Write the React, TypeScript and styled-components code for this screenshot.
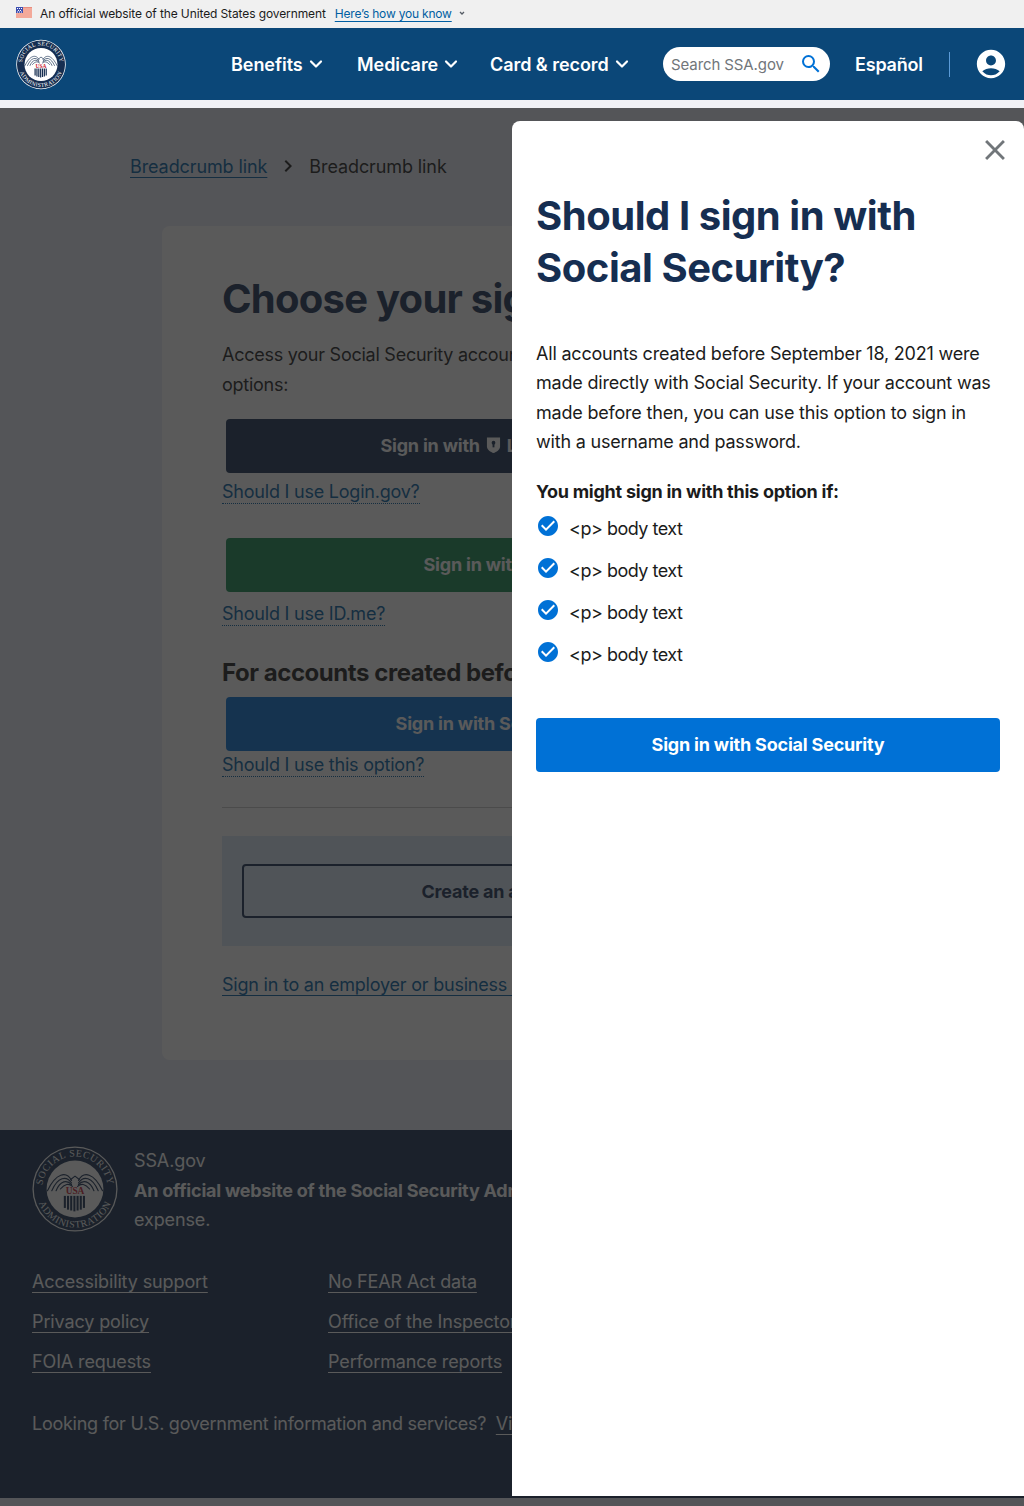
import React from "react";
import styled, { createGlobalStyle } from "styled-components";

const FONT = `"Inter", "Liberation Sans", sans-serif`;
const NAVY = "#162e51";
const BLUE = "#0071d6";

const Global = createGlobalStyle`
  html, body { margin: 0; padding: 0; background: #e9edf6; }
  body { font-family: ${FONT}; color: #1b1b1b; }
  * { box-sizing: border-box; }
`;

const Page = styled.div`
  position: relative;
  width: 1024px;
  height: 1506px;
  overflow: hidden;
  background: #e9edf6;
`;

/* Government banner */
const GovBanner = styled.div`
  height: 28px;
  background: #f0f0f0;
  display: flex;
  align-items: center;
  padding: 0 0 1px 16px;
  font-size: 12px;
  letter-spacing: -0.11px;
  color: #1b1b1b;
`;
const Flag = styled.svg`
  width: 16px;
  height: 11px;
  margin-right: 8px;
  margin-top: -2px;
`;
const BannerLink = styled.a`
  color: #005ea2;
  letter-spacing: -0.2px;
  text-decoration: underline;
  text-underline-offset: 3px;
  margin-left: 9px;
`;
const BannerCaret = styled.svg`
  width: 8px;
  height: 8px;
  margin-left: 6px;
  margin-top: -2px;
`;

/* Site header */
const Header = styled.header`
  height: 72px;
  background: #0b4778;
  display: flex;
  align-items: center;
  padding-left: 16px;
`;
const LogoWrap = styled.div`
  width: 50px;
  height: 51px;
  flex: none;
  margin-right: 165px;
`;
const NavItem = styled.a<{ $w: number }>`
  width: ${(p) => p.$w}px;
  flex: none;
  display: flex;
  align-items: center;
  gap: 5px;
  color: #fff;
  font-size: 18px;
  font-weight: 600;
  letter-spacing: -0.05px;
`;
const SearchPill = styled.div`
  width: 167px;
  height: 34px;
  flex: none;
  border-radius: 17px;
  background: #fff;
  display: flex;
  align-items: center;
  justify-content: space-between;
  padding: 0 7px 0 8px;
  margin-right: 25px;
  color: #71767a;
  font-size: 15px;
  letter-spacing: -0.1px;
`;
const Lang = styled.a`
  color: #fff;
  font-size: 18px;
  font-weight: 600;
  letter-spacing: -0.2px;
  width: 94px;
  flex: none;
`;
const VRule = styled.div`
  width: 1px;
  height: 25px;
  background: #5b9bd8;
  margin-right: 24px;
`;
const UserIcon = styled.svg`
  width: 34px;
  height: 34px;
  fill: #fff;
`;
const Strip = styled.div`
  height: 8px;
  background: #f0f1f6;
`;

/* Main content behind the overlay */
const Main = styled.main`
  height: 1022px;
  padding: 47px 0 0 130px;
`;
const Breadcrumbs = styled.nav`
  height: 22px;
  display: flex;
  align-items: center;
  font-size: 18px;
  letter-spacing: -0.1px;
`;
const CrumbLink = styled.a`
  color: #005ea2;
  text-decoration: underline;
  text-underline-offset: 4px;
`;
const CrumbIcon = styled.svg`
  width: 24px;
  height: 24px;
  fill: #1b1b1b;
  margin: 0 9px 0 9px;
`;
const Card = styled.section`
  width: 700px;
  height: 834px;
  margin: 49px 0 0 32px;
  padding: 47px 60px 0;
  background: #fff;
  border-radius: 8px;
`;
const CardTitle = styled.h1`
  margin: 0;
  font-size: 40px;
  line-height: 52px;
  font-weight: 700;
  letter-spacing: -0.75px;
  color: ${NAVY};
  white-space: nowrap;
`;
const CardIntro = styled.p`
  margin: 15px 0 0;
  font-size: 18px;
  line-height: 29.5px;
  letter-spacing: -0.25px;
`;
const Action = styled.a<{ $bg: string; $top: number; $pad?: number }>`
  height: 54px;
  margin: ${(p) => p.$top}px 4px 0;
  padding: 0 ${(p) => p.$pad ?? 0}px 2px 0;
  border-radius: 4px;
  background: ${(p) => p.$bg};
  color: #fff;
  font-size: 18px;
  font-weight: 700;
  letter-spacing: -0.2px;
  display: flex;
  align-items: center;
  justify-content: center;
  white-space: nowrap;
`;
const ShieldSvg = styled.svg`
  width: 15px;
  height: 18px;
  margin: 0 6px;
`;
const HelpLink = styled.a<{ $top: number }>`
  display: table;
  margin-top: ${(p) => p.$top}px;
  font-size: 18px;
  line-height: 22px;
  letter-spacing: -0.22px;
  color: #005ea2;
  border-bottom: 1px dotted #005ea2;
`;
const Subhead = styled.h2`
  margin: 31px 0 0;
  font-size: 24px;
  line-height: 32px;
  font-weight: 700;
  letter-spacing: -0.45px;
  white-space: nowrap;
`;
const Rule = styled.hr`
  margin: 30px 0 0;
  border: 0;
  border-top: 1px solid #c9c9c9;
`;
const Callout = styled.div`
  margin-top: 28px;
  height: 110px;
  background: #d9e8f6;
  padding: 28px 20px;
`;
const OutlineButton = styled.a`
  height: 54px;
  border: 2px solid ${NAVY};
  border-radius: 4px;
  color: ${NAVY};
  font-size: 18px;
  font-weight: 700;
  letter-spacing: -0.2px;
  display: flex;
  align-items: center;
  justify-content: center;
  padding-right: 24px;
`;
const BusinessLink = styled.a`
  display: block;
  margin-top: 28px;
  font-size: 18px;
  line-height: 22px;
  letter-spacing: -0.22px;
  color: #005ea2;
  text-decoration: underline;
  text-underline-offset: 4px;
`;

/* Footer */
const Footer = styled.footer`
  height: 368px;
  background: ${NAVY};
  color: #fff;
  padding: 16px 32px 0;
  font-size: 18px;
  letter-spacing: -0.12px;
`;
const FooterTop = styled.div`
  display: flex;
  gap: 16px;
`;
const FooterSeal = styled.div`
  width: 86px;
  height: 86px;
  flex: none;
`;
const FooterCopy = styled.div`
  line-height: 29.5px;
  white-space: nowrap;
`;
const FooterStrong = styled.strong`
  font-weight: 700;
  letter-spacing: -0.22px;
`;
const FooterLinks = styled.div`
  margin-top: 27px;
  display: grid;
  grid-template-columns: 296px 1fr;
  grid-auto-rows: 40px;
`;
const FooterLinkCell = styled.div`
  line-height: 40px;
`;
const FooterLink = styled.a`
  color: #fff;
  text-decoration: underline;
  text-underline-offset: 4px;
`;
const FooterBottom = styled.div`
  margin-top: 31px;
  line-height: 22px;
  letter-spacing: -0.26px;
  white-space: nowrap;
`;

/* Overlay and modal panel */
const Overlay = styled.div`
  position: absolute;
  left: 0;
  right: 0;
  top: 108px;
  bottom: 0;
  background: rgba(29, 29, 29, 0.73);
`;
const Panel = styled.aside`
  position: absolute;
  left: 512px;
  top: 121px;
  width: 512px;
  height: 1375px;
  background: #fff;
  border-radius: 8px 8px 0 0;
  padding: 69px 24px 0;
`;
const CloseIcon = styled.svg`
  position: absolute;
  top: 12px;
  right: 12px;
  width: 34px;
  height: 34px;
  fill: #71767a;
`;
const PanelTitle = styled.h2`
  margin: 0;
  font-size: 40px;
  line-height: 52px;
  font-weight: 700;
  letter-spacing: -0.45px;
  color: ${NAVY};
`;
const PanelText = styled.p`
  margin: 45px 0 0;
  font-size: 18px;
  line-height: 29.25px;
  letter-spacing: -0.2px;
  color: #1b1b1b;
`;
const PanelLead = styled.p`
  margin: 21px 0 0;
  font-size: 18px;
  line-height: 29px;
  font-weight: 700;
  letter-spacing: -0.25px;
`;
const CheckList = styled.ul`
  list-style: none;
  margin: 2px 0 0;
  padding: 0;
`;
const CheckRow = styled.li`
  height: 42px;
  display: flex;
  align-items: center;
  padding-bottom: 2px;
  font-size: 18px;
  letter-spacing: -0.5px;
`;
const CheckIcon = styled.svg`
  width: 24px;
  height: 24px;
  fill: ${BLUE};
  margin-right: 9px;
  margin-top: -4px;
`;
const PrimaryButton = styled.a`
  margin-top: 42px;
  height: 54px;
  padding-bottom: 2px;
  background: ${BLUE};
  border-radius: 4px;
  color: #fff;
  font-size: 18px;
  font-weight: 700;
  letter-spacing: -0.2px;
  display: flex;
  align-items: center;
  justify-content: center;
`;

const SealName = styled.text`
  font-family: "Liberation Serif", serif;
  font-size: 11.5px;
  letter-spacing: 0.7px;
  fill: #fff;
`;
const SealUsa = styled.text`
  font-family: "Liberation Serif", serif;
  font-size: 11px;
  font-weight: 700;
  fill: #c8202f;
  text-anchor: middle;
`;

const feathers = [
  "M46 40 C40 29 28 31 18 52",
  "M46 43 C40 34 30 36 23 52",
  "M46 45 C41 39 33 40 28 52",
  "M47 47 C43 43 38 44 33 50",
];

const Seal: React.FC<{ id: string }> = ({ id }) => (
  <svg viewBox="0 0 100 100" width="100%" height="100%">
    <defs>
      <path id={`${id}-top`} d="M 12 50 A 38 38 0 0 1 88 50" />
      <path id={`${id}-bot`} d="M 5 50 A 45 45 0 0 0 95 50" />
    </defs>
    <circle cx="50" cy="50" r="49.5" fill="#fff" />
    <circle cx="50" cy="50" r="48" fill={NAVY} />
    <circle cx="50" cy="50" r="33" fill="#fff" />
    <SealName>
      <textPath href={`#${id}-top`} startOffset="50%" textAnchor="middle">
        SOCIAL SECURITY
      </textPath>
    </SealName>
    <SealName>
      <textPath href={`#${id}-bot`} startOffset="50%" textAnchor="middle">
        ADMINISTRATION
      </textPath>
    </SealName>
    <g fill="none" stroke={NAVY} strokeWidth="1.3" strokeLinecap="round">
      {feathers.map((d) => (
        <React.Fragment key={d}>
          <path d={d} />
          <path d={d} transform="matrix(-1 0 0 1 100 0)" />
        </React.Fragment>
      ))}
      <path d="M45 39 L50 35 L55 39" />
    </g>
    <SealUsa x="50" y="56">USA</SealUsa>
    <g fill={NAVY}>
      <rect x="37" y="58" width="2.4" height="14" />
      <rect x="40.7" y="58" width="2.4" height="16" />
      <rect x="44.4" y="58" width="2.4" height="17" />
      <rect x="48.1" y="58" width="2.4" height="18" />
      <rect x="51.8" y="58" width="2.4" height="17" />
      <rect x="55.5" y="58" width="2.4" height="16" />
      <rect x="59.2" y="58" width="2.4" height="14" />
    </g>
  </svg>
);

const Chevron = () => (
  <svg width="16" height="16" viewBox="0 0 16 16" fill="none" stroke="#fff" strokeWidth="2.2" strokeLinecap="round" strokeLinejoin="round">
    <path d="M3 5.5 L8 10.5 L13 5.5" />
  </svg>
);

const ShieldIcon = () => (
  <ShieldSvg viewBox="0 0 16 19">
    <path d="M1 1.5 H15 V11 C15 14.5 11 17 8 18 C5 17 1 14.5 1 11 Z" fill="#fff" />
    <circle cx="8" cy="7" r="2" fill={NAVY} />
    <rect x="7" y="7" width="2" height="5" fill={NAVY} />
  </ShieldSvg>
);

const checkPath = "M12 2C6.48 2 2 6.48 2 12s4.48 10 10 10 10-4.48 10-10S17.52 2 12 2zm-2 15l-5-5 1.41-1.41L10 14.17l7.59-7.59L19 8l-9 9z";

export default function App() {
  return (
    <>
      <Global />
      <Page>
        <GovBanner>
          <Flag viewBox="0 0 16 11">
            <rect width="16" height="11" fill="#f3a99a" />
            <rect width="16" height="1" fill="#e88d7e" />
            <rect width="7" height="6" fill="#3d4fb0" />
            <path d="M1 1h1v1H1zM3 1h1v1H3zM5 1h1v1H5zM2 3h1v1H2zM4 3h1v1H4zM1 4.5h1v1H1zM3 4.5h1v1H3zM5 4.5h1v1H5z" fill="#fff" />
          </Flag>
          An official website of the United States government
          <BannerLink>Here’s how you know</BannerLink>
          <BannerCaret viewBox="0 0 8 8" fill="none" stroke="#565c65" strokeWidth="1.3">
            <path d="M2 3 L4 5 L6 3" />
          </BannerCaret>
        </GovBanner>
        <Header>
          <LogoWrap>
            <Seal id="head" />
          </LogoWrap>
          <NavItem $w={126}>Benefits <Chevron /></NavItem>
          <NavItem $w={133}>Medicare <Chevron /></NavItem>
          <NavItem $w={173}>Card &amp; record <Chevron /></NavItem>
          <SearchPill>
            Search SSA.gov
            <svg width="24" height="24" viewBox="0 0 24 24" fill={BLUE}>
              <path d="M15.5 14h-.79l-.28-.27A6.471 6.471 0 0 0 16 9.5 6.5 6.5 0 1 0 9.5 16c1.61 0 3.09-.59 4.23-1.57l.27.28v.79l5 4.99L20.49 19l-4.99-5zm-6 0C7.01 14 5 11.99 5 9.5S7.01 5 9.5 5 14 7.01 14 9.5 11.99 14 9.5 14z" />
            </svg>
          </SearchPill>
          <Lang>Español</Lang>
          <VRule />
          <UserIcon viewBox="0 0 24 24">
            <path d="M12 2C6.48 2 2 6.48 2 12s4.48 10 10 10 10-4.48 10-10S17.52 2 12 2zm0 4c1.93 0 3.5 1.57 3.5 3.5S13.93 13 12 13s-3.5-1.57-3.5-3.5S10.07 6 12 6zm0 14c-2.03 0-4.43-.82-6.14-2.88C7.55 15.8 9.68 15 12 15s4.45.8 6.14 2.12C16.43 19.18 14.03 20 12 20z" />
          </UserIcon>
        </Header>
        <Strip />
        <Main>
          <Breadcrumbs>
            <CrumbLink>Breadcrumb link</CrumbLink>
            <CrumbIcon viewBox="0 0 24 24">
              <path d="M10 6L8.59 7.41 13.17 12l-4.58 4.59L10 18l6-6z" />
            </CrumbIcon>
            Breadcrumb link
          </Breadcrumbs>
          <Card>
            <CardTitle>Choose your sign in option</CardTitle>
            <CardIntro>
              Access your Social Security account using one of the sign in
              <br />
              options:
            </CardIntro>
            <Action $bg={NAVY} $top={20} $pad={51}>
              Sign in with<ShieldIcon />Login.gov
            </Action>
            <HelpLink $top={8}>Should I use Login.gov?</HelpLink>
            <Action $bg="#13894e" $top={34} $pad={24}>Sign in with ID.me</Action>
            <HelpLink $top={11}>Should I use ID.me?</HelpLink>
            <Subhead>For accounts created before September 18, 2021</Subhead>
            <Action $bg={BLUE} $top={8}>Sign in with Social Security</Action>
            <HelpLink $top={3}>Should I use this option?</HelpLink>
            <Rule />
            <Callout>
              <OutlineButton>Create an account</OutlineButton>
            </Callout>
            <BusinessLink>Sign in to an employer or business account</BusinessLink>
          </Card>
        </Main>
        <Footer>
          <FooterTop>
            <FooterSeal>
              <Seal id="foot" />
            </FooterSeal>
            <FooterCopy>
              SSA.gov
              <br />
              <FooterStrong>An official website of the Social Security Administration.</FooterStrong> Produced at U.S. taxpayer
              <br />
              expense.
            </FooterCopy>
          </FooterTop>
          <FooterLinks>
            <FooterLinkCell><FooterLink>Accessibility support</FooterLink></FooterLinkCell>
            <FooterLinkCell><FooterLink>No FEAR Act data</FooterLink></FooterLinkCell>
            <FooterLinkCell><FooterLink>Privacy policy</FooterLink></FooterLinkCell>
            <FooterLinkCell><FooterLink>Office of the Inspector General</FooterLink></FooterLinkCell>
            <FooterLinkCell><FooterLink>FOIA requests</FooterLink></FooterLinkCell>
            <FooterLinkCell><FooterLink>Performance reports</FooterLink></FooterLinkCell>
          </FooterLinks>
          <FooterBottom>
            Looking for U.S. government information and services?&nbsp; <FooterLink>Visit USA.gov</FooterLink>
          </FooterBottom>
        </Footer>
        <Overlay />
        <Panel>
          <CloseIcon viewBox="0 0 24 24">
            <path d="M19 6.41L17.59 5 12 10.59 6.41 5 5 6.41 10.59 12 5 17.59 6.41 19 12 13.41 17.59 19 19 17.59 13.41 12z" />
          </CloseIcon>
          <PanelTitle>Should I sign in with Social Security?</PanelTitle>
          <PanelText>
            All accounts created before September 18, 2021 were made directly with Social Security. If your account was made before then, you can use this option to sign in with a username and password.
          </PanelText>
          <PanelLead>You might sign in with this option if:</PanelLead>
          <CheckList>
            {[0, 1, 2, 3].map((i) => (
              <CheckRow key={i}>
                <CheckIcon viewBox="0 0 24 24"><path d={checkPath} /></CheckIcon>
                {"<p> body text"}
              </CheckRow>
            ))}
          </CheckList>
          <PrimaryButton>Sign in with Social Security</PrimaryButton>
        </Panel>
      </Page>
    </>
  );
}
